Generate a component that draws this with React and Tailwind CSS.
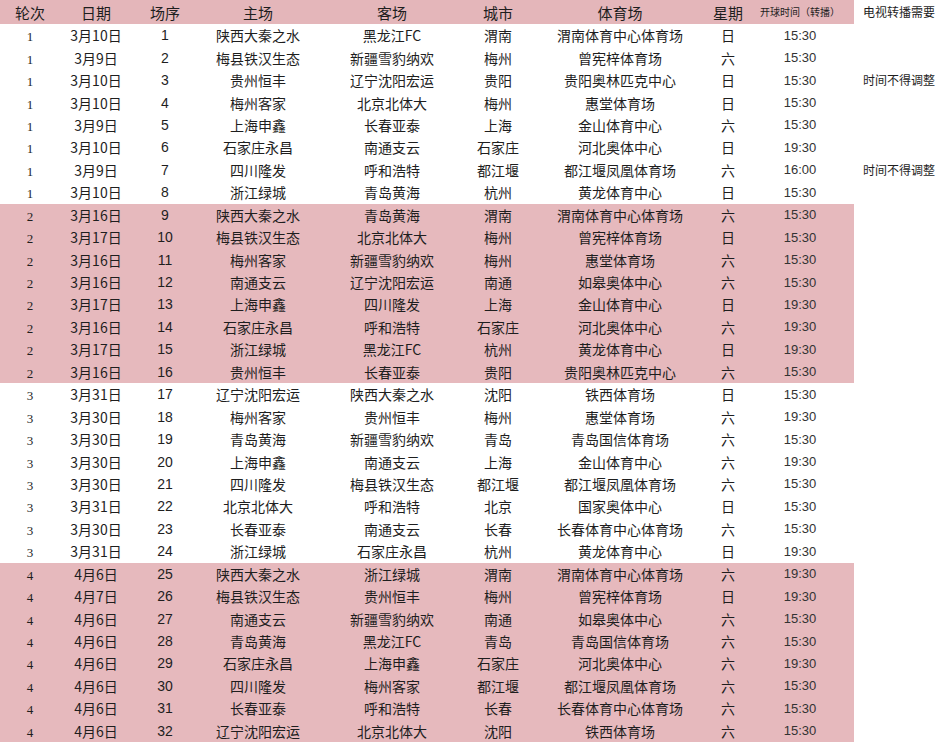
const rows = [
  ["1","3月10日","1","陕西大秦之水","黑龙江FC","渭南","渭南体育中心体育场","日","15:30"],
  ["1","3月9日","2","梅县铁汉生态","新疆雪豹纳欢","梅州","曾宪梓体育场","六","15:30"],
  ["1","3月10日","3","贵州恒丰","辽宁沈阳宏运","贵阳","贵阳奥林匹克中心","日","15:30"],
  ["1","3月10日","4","梅州客家","北京北体大","梅州","惠堂体育场","日","15:30"],
  ["1","3月9日","5","上海申鑫","长春亚泰","上海","金山体育中心","六","15:30"],
  ["1","3月10日","6","石家庄永昌","南通支云","石家庄","河北奥体中心","日","19:30"],
  ["1","3月9日","7","四川隆发","呼和浩特","都江堰","都江堰凤凰体育场","六","16:00"],
  ["1","3月10日","8","浙江绿城","青岛黄海","杭州","黄龙体育中心","日","15:30"],
  ["2","3月16日","9","陕西大秦之水","青岛黄海","渭南","渭南体育中心体育场","六","15:30"],
  ["2","3月17日","10","梅县铁汉生态","北京北体大","梅州","曾宪梓体育场","日","15:30"],
  ["2","3月16日","11","梅州客家","新疆雪豹纳欢","梅州","惠堂体育场","六","15:30"],
  ["2","3月16日","12","南通支云","辽宁沈阳宏运","南通","如皋奥体中心","六","15:30"],
  ["2","3月17日","13","上海申鑫","四川隆发","上海","金山体育中心","日","19:30"],
  ["2","3月16日","14","石家庄永昌","呼和浩特","石家庄","河北奥体中心","六","19:30"],
  ["2","3月17日","15","浙江绿城","黑龙江FC","杭州","黄龙体育中心","日","19:30"],
  ["2","3月16日","16","贵州恒丰","长春亚泰","贵阳","贵阳奥林匹克中心","六","15:30"],
  ["3","3月31日","17","辽宁沈阳宏运","陕西大秦之水","沈阳","铁西体育场","日","15:30"],
  ["3","3月30日","18","梅州客家","贵州恒丰","梅州","惠堂体育场","六","19:30"],
  ["3","3月30日","19","青岛黄海","新疆雪豹纳欢","青岛","青岛国信体育场","六","15:30"],
  ["3","3月30日","20","上海申鑫","南通支云","上海","金山体育中心","六","19:30"],
  ["3","3月30日","21","四川隆发","梅县铁汉生态","都江堰","都江堰凤凰体育场","六","15:30"],
  ["3","3月31日","22","北京北体大","呼和浩特","北京","国家奥体中心","日","15:30"],
  ["3","3月30日","23","长春亚泰","南通支云","长春","长春体育中心体育场","六","15:30"],
  ["3","3月31日","24","浙江绿城","石家庄永昌","杭州","黄龙体育中心","日","19:30"],
  ["4","4月6日","25","陕西大秦之水","浙江绿城","渭南","渭南体育中心体育场","六","19:30"],
  ["4","4月7日","26","梅县铁汉生态","贵州恒丰","梅州","曾宪梓体育场","日","19:30"],
  ["4","4月6日","27","南通支云","新疆雪豹纳欢","南通","如皋奥体中心","六","15:30"],
  ["4","4月6日","28","青岛黄海","黑龙江FC","青岛","青岛国信体育场","六","15:30"],
  ["4","4月6日","29","石家庄永昌","上海申鑫","石家庄","河北奥体中心","六","19:30"],
  ["4","4月6日","30","四川隆发","梅州客家","都江堰","都江堰凤凰体育场","六","15:30"],
  ["4","4月6日","31","长春亚泰","呼和浩特","长春","长春体育中心体育场","六","15:30"],
  ["4","4月6日","32","辽宁沈阳宏运","北京北体大","沈阳","铁西体育场","六","15:30"],
];

const notes = { 2: "时间不得调整", 6: "时间不得调整" };

function Row({ r, i }) {
  const pink = r[0] === "2" || r[0] === "4";
  return (
    <div className="flex h-[22.45px]">
      <div className={`flex w-[854px] items-center ${pink ? "bg-[#e6b9bd]" : "bg-white"}`}>
        <div className="w-[60px] pt-[3px] text-center font-['Liberation_Serif',serif] text-[13px]">{r[0]}</div>
        <div className="w-[72px] text-center text-[14px]">{r[1]}</div>
        <div className="w-[66px] text-center text-[14px] font-['Liberation_Sans',sans-serif]">{r[2]}</div>
        <div className="w-[120px] text-center text-[14px]">{r[3]}</div>
        <div className="w-[148px] text-center text-[14px]">{r[4]}</div>
        <div className="w-[64px] text-center text-[14px]">{r[5]}</div>
        <div className="w-[180px] text-center text-[14px]">{r[6]}</div>
        <div className="w-[36px] text-center text-[14px]">{r[7]}</div>
        <div className="w-[108px] text-center text-[13px] font-['Liberation_Sans',sans-serif] text-[#333]">{r[8]}</div>
      </div>
      <div className="flex flex-1 items-center pl-[9px] text-[12px] whitespace-nowrap">{notes[i] || ""}</div>
    </div>
  );
}

export default function App() {
  return (
    <div className="h-[746px] w-[938px] overflow-hidden bg-white font-['Noto_Sans_CJK_SC',sans-serif] leading-none text-[#1e1e1e]">
      <div className="flex h-[24px]">
        <div className="flex w-[854px] items-center bg-[#e4b6ba] text-[15px]">
          <div className="w-[60px] text-center">轮次</div>
          <div className="w-[72px] text-center">日期</div>
          <div className="w-[66px] text-center">场序</div>
          <div className="w-[120px] text-center">主场</div>
          <div className="w-[148px] text-center">客场</div>
          <div className="w-[64px] text-center">城市</div>
          <div className="w-[180px] text-center">体育场</div>
          <div className="w-[36px] text-center">星期</div>
          <div className="w-[108px] text-center text-[10px]">开球时间（转播）</div>
        </div>
        <div className="flex flex-1 items-center pl-[9px] text-[12px] whitespace-nowrap">电视转播需要</div>
      </div>
      {rows.map((r, i) => (
        <Row key={i} r={r} i={i} />
      ))}
    </div>
  );
}
